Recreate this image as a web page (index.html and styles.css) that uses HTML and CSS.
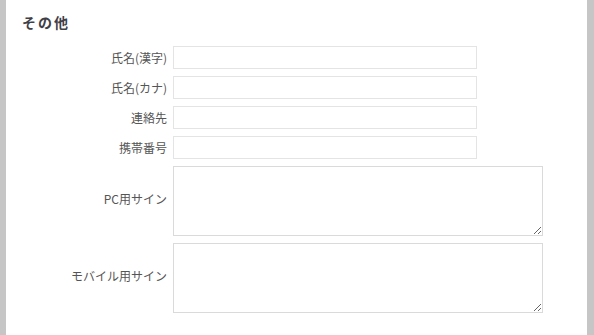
FILE: index.html
```html
<!DOCTYPE html>
<html lang="ja">
<head>
    <meta charset="UTF-8">
    <meta name="viewport" content="width=device-width, initial-scale=1.0">
    <title>その他</title>
    <link rel="stylesheet" href="styles.css">
</head>
<body>
    <div class="page">
        <div class="side side-left"></div>
        <div class="content">
            <h2>その他</h2>
            <form class="fields">
                <label class="field-label" for="nameKanji">氏名(漢字)</label>
                <input class="field-input" id="nameKanji" type="text">

                <label class="field-label" for="nameKana">氏名(カナ)</label>
                <input class="field-input" id="nameKana" type="text">

                <label class="field-label" for="contact">連絡先</label>
                <input class="field-input" id="contact" type="text">

                <label class="field-label" for="mobile">携帯番号</label>
                <input class="field-input" id="mobile" type="text">

                <label class="field-label field-label-tall" for="pcSign">PC用サイン</label>
                <textarea class="field-text" id="pcSign"></textarea>

                <label class="field-label field-label-tall" for="mobileSign">モバイル用サイン</label>
                <textarea class="field-text" id="mobileSign"></textarea>
            </form>
        </div>
        <div class="side side-right"></div>
    </div>
</body>
</html>
```

FILE: styles.css
```css
* {
    box-sizing: border-box;
    margin: 0;
    padding: 0;
}
body {
    font-family: "Noto Sans CJK JP", "Liberation Sans", sans-serif;
    color: #555;
    background: #fff;
}
.page {
    display: flex;
    height: 335px;
}
.side {
    background: #c6c6c6;
}
.side-left {
    width: 6px;
}
.side-right {
    width: 7px;
}
.content {
    flex: 1;
    background: #fff;
    padding: 13px 0 0 16px;
}
h2 {
    font-size: 14px;
    line-height: 18px;
    font-weight: bold;
    letter-spacing: 2px;
    color: #3f3f48;
    margin-bottom: 15px;
}
.fields {
    display: grid;
    grid-template-columns: 145px auto;
    column-gap: 6px;
    row-gap: 7px;
    justify-content: start;
    align-items: center;
}
.field-label {
    font-size: 12px;
    line-height: 14px;
    text-align: right;
    color: #555;
}
.field-label-tall {
    margin-bottom: 5px;
}
.field-input {
    width: 304px;
    height: 23px;
    border: 1px solid #e4e4e4;
    background: #fff;
    outline: none;
}
.field-text {
    width: 370px;
    height: 70px;
    border: 1px solid #dadada;
    background: #fff;
    outline: none;
    display: block;
}
```
